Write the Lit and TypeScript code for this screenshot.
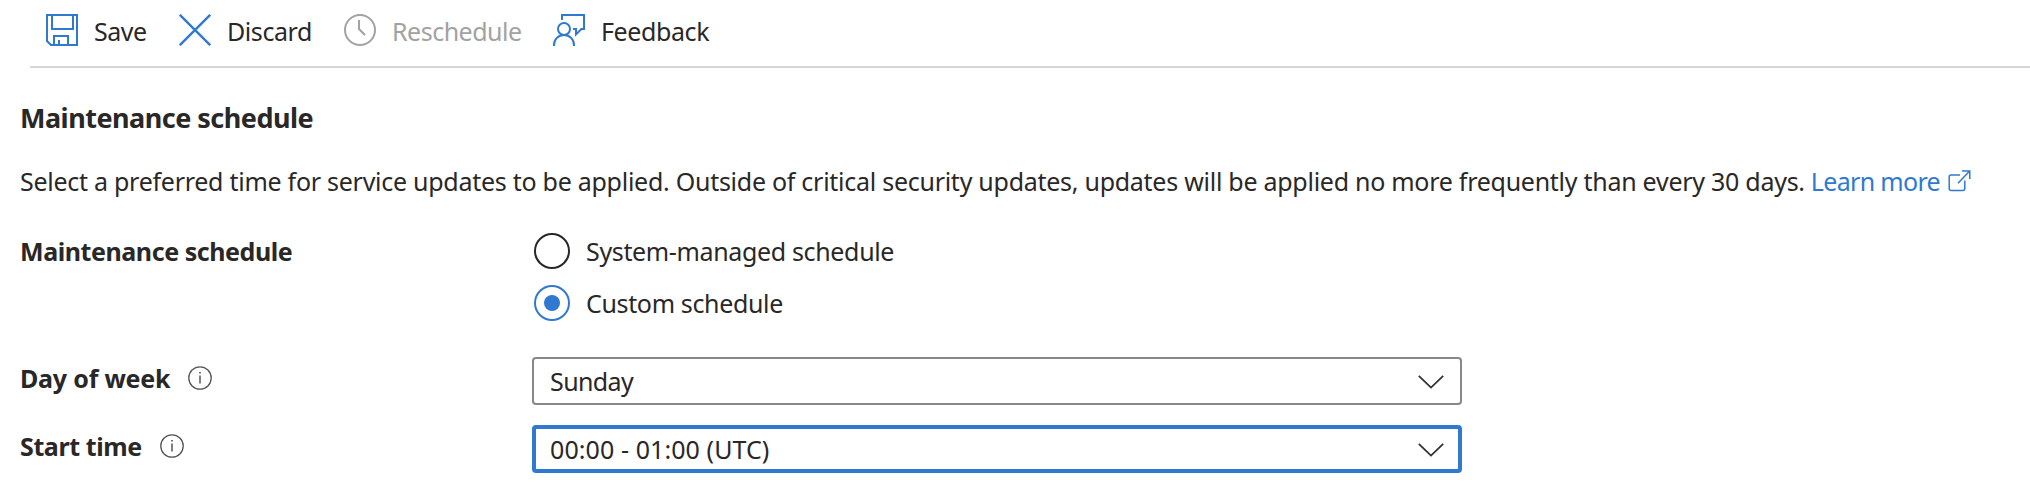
import { LitElement, html, css, svg } from "lit";
import { customElement, property } from "lit/decorators.js";

const saveIcon = svg`<svg width="32" height="32" viewBox="0 0 32 32" fill="none" stroke="#2f7ad0" stroke-width="2">
  <path d="M1 1H31V31H5L1 27Z"/><path d="M6 1V15H27V1"/><path d="M8 31V22H22V31M13 31V26"/></svg>`;
const discardIcon = svg`<svg width="32" height="32" viewBox="0 0 32 32" fill="none" stroke="#2f7ad0" stroke-width="2.4">
  <path d="M.8 .8L31.2 31.2M31.2 .8L.8 31.2"/></svg>`;
const clockIcon = svg`<svg width="32" height="32" viewBox="0 0 32 32" fill="none" stroke="#a2a2a2" stroke-width="2">
  <circle cx="16" cy="16" r="15"/><path d="M15 6V15L21 21"/></svg>`;
const feedbackIcon = svg`<svg width="32" height="32" viewBox="0 0 32 32" fill="none" stroke="#2f7ad0" stroke-width="2">
  <path d="M9 6V1H31V15H28.4L23 20.4V15H20"/><circle cx="11" cy="15" r="6"/><path d="M1 32V31C1 25.4 5.4 21 11 21S21 25.4 21 31V32"/></svg>`;
const externalIcon = svg`<svg width="23" height="22" viewBox="0 0 23 22" fill="none" stroke="#2f7ad0" stroke-width="1.5">
  <path d="M12 5H3.2C2 5 1.2 5.8 1.2 7V18.4C1.2 19.6 2 20.4 3.2 20.4H14.8C16 20.4 16.8 19.6 16.8 18.4V10.5M10 13.2L21.4 1.2M14 1H21.8V9"/></svg>`;
const infoIcon = svg`<svg width="24" height="24" viewBox="0 0 24 24" fill="none" stroke="#555" stroke-width="1.3">
  <circle cx="12" cy="12" r="11.2"/><path d="M12 9.6V17.5" stroke-width="1.5"/><path d="M12 6V7.6" stroke-width="1.7"/></svg>`;
const chevron = svg`<svg width="26" height="14" viewBox="0 0 26 14" fill="none" stroke="#323130" stroke-width="1.8">
  <path d="M.8 .8L13 12.6L25.2 .8"/></svg>`;

@customElement("command-button")
class CommandButton extends LitElement {
  @property({ attribute: false }) icon: unknown;
  static styles = css`
    :host { display: flex; gap: 16px; height: 34px; white-space: nowrap; }
    svg { display: block; flex: none; }
  `;
  render() {
    return html`${this.icon}<slot></slot>`;
  }
}

@customElement("select-box")
class SelectBox extends LitElement {
  static styles = css`
    :host { display: block; }
    .box {
      box-sizing: border-box; width: 930px; height: 48px; border-radius: 4px;
      box-shadow: inset 0 0 0 2px #8a8886; padding: 7px 18px 7px 18px;
      display: flex; justify-content: space-between; align-items: flex-start;
    }
    :host([focused]) .box { box-shadow: inset 0 0 0 4px #2f7ad0; }
    svg { display: block; margin-top: 11px; }
  `;
  render() {
    return html`<div class="box"><slot></slot>${chevron}</div>`;
  }
}

@customElement("app-root")
class AppRoot extends LitElement {
  static styles = css`
    :host {
      display: block; height: 500px; overflow: hidden; background: #fff; color: #292827;
      font-family: "Noto Sans", "Open Sans", sans-serif; font-size: 25px; line-height: 34px;
      white-space: nowrap;
    }
    svg { display: block; flex: none; }
    .toolbar {
      display: flex; gap: 31px; margin-left: 30px; padding: 14px 0 18px 16px;
      border-bottom: 2px solid #d6d6d6;
    }
    .save { letter-spacing: -0.48px; min-width: 102px; }
    .discard { letter-spacing: -0.43px; min-width: 134px; }
    .reschedule { letter-spacing: -0.5px; min-width: 178px; }
    .reschedule { color: #a2a2a2; }
    .feedback { letter-spacing: -0.4px; }
    main { padding: 31px 0 0 20px; }
    h2 { margin: 0; font-size: 27px; line-height: 37px; font-weight: 700; letter-spacing: -0.51px; }
    .description { display: flex; margin-top: 28px; }
    .sentence { letter-spacing: -0.268px; }
    .link { display: flex; gap: 8px; margin-left: 6px; color: #2f7ad0; letter-spacing: -0.67px; }
    .link svg { margin-top: 6px; }
    .row { display: grid; grid-template-columns: 512px 930px; }
    .schedule { margin-top: 35px; }
    .day { margin-top: 36px; }
    .start { margin-top: 20px; }
    .label { display: flex; font-weight: 700; padding-top: 4px; gap: 18px; letter-spacing: -0.21px; }
    .label svg { margin-top: 5px; }
    .schedule .label { padding-top: 1px; letter-spacing: -0.43px; }
    .start .label { letter-spacing: -0.4px; }
    .options { display: grid; gap: 16px; padding-left: 2px; }
    .option { display: flex; gap: 16px; height: 36px; letter-spacing: -0.35px; }
    .option span { margin-top: 1px; }
    .radio {
      box-sizing: border-box; width: 36px; height: 36px; border: 2px solid #292827;
      border-radius: 50%; display: grid; place-items: center;
    }
    .checked { border-color: #2f7ad0; }
    .dot { width: 16px; height: 16px; border-radius: 50%; background: #2f7ad0; }
    .weekday { letter-spacing: -0.6px; }
    .time { letter-spacing: 0.085px; }
  `;
  render() {
    return html`
      <div class="toolbar">
        <command-button class="save" .icon=${saveIcon}>Save</command-button>
        <command-button class="discard" .icon=${discardIcon}>Discard</command-button>
        <command-button class="reschedule" .icon=${clockIcon}>Reschedule</command-button>
        <command-button class="feedback" .icon=${feedbackIcon}>Feedback</command-button>
      </div>
      <main>
        <h2>Maintenance schedule</h2>
        <div class="description">
          <span class="sentence">Select a preferred time for service updates to be applied. Outside of critical security updates, updates will be applied no more frequently than every 30 days.</span>
          <a class="link"><span>Learn more</span>${externalIcon}</a>
        </div>
        <div class="row schedule">
          <div class="label">Maintenance schedule</div>
          <div class="options">
            <div class="option"><i class="radio"></i><span>System-managed schedule</span></div>
            <div class="option"><i class="radio checked"><i class="dot"></i></i><span>Custom schedule</span></div>
          </div>
        </div>
        <div class="row day">
          <div class="label"><span>Day of week</span>${infoIcon}</div>
          <select-box><span class="weekday">Sunday</span></select-box>
        </div>
        <div class="row start">
          <div class="label"><span>Start time</span>${infoIcon}</div>
          <select-box focused><span class="time">00:00 - 01:00 (UTC)</span></select-box>
        </div>
      </main>`;
  }
}
